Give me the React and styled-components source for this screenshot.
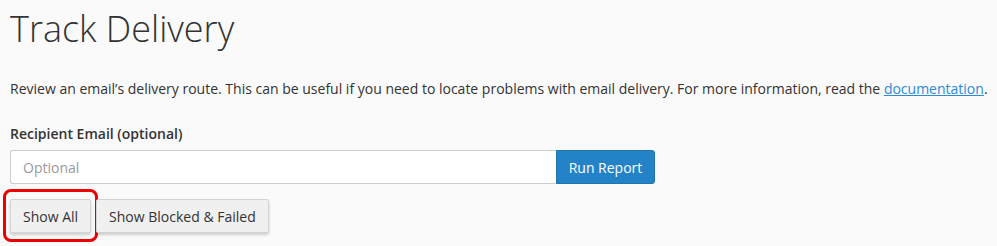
import styled, { createGlobalStyle } from "styled-components";

const GlobalStyle = createGlobalStyle`
  html, body {
    margin: 0;
    padding: 0;
    background: #fafafa;
  }
  body {
    font-family: "Open Sans", "Liberation Sans", sans-serif;
    color: #333;
  }
  * {
    box-sizing: border-box;
  }
`;

const Page = styled.main`
  padding: 0 0 0 10px;
  width: 997px;
  height: 246px;
  overflow: hidden;
`;

const Title = styled.h1`
  font-weight: 300;
  font-size: 36px;
  line-height: 40px;
  color: #333;
  margin: 9px 0 0;
`;

const Intro = styled.p`
  font-size: 14px;
  line-height: 20px;
  margin: 30px 0 0;
  white-space: nowrap;

  a {
    color: #2a8bd6;
    text-decoration: underline;
  }
`;

const Field = styled.div`
  margin-top: 25px;
`;

const Label = styled.label`
  display: block;
  font-size: 14px;
  font-weight: 600;
  line-height: 20px;
  margin-bottom: 6px;
`;

const InputGroup = styled.div`
  display: flex;
  width: 645px;
  height: 34px;
`;

const Input = styled.input`
  flex: 0 0 546px;
  height: 34px;
  padding: 6px 12px;
  font-family: inherit;
  font-size: 14px;
  color: #333;
  background: #fff;
  border: 1px solid #ccc;
  border-right: none;
  border-radius: 3px 0 0 3px;
  outline: none;

  &::placeholder {
    color: #999;
  }
`;

const PrimaryButton = styled.button`
  flex: 0 0 99px;
  height: 34px;
  padding: 0;
  white-space: nowrap;
  font-family: inherit;
  font-size: 14px;
  color: #fff;
  background: #2483c6;
  border: 1px solid #1f74b2;
  border-radius: 0 3px 3px 0;
`;

const Filters = styled.div`
  display: flex;
  gap: 5px;
  margin-top: 15px;
`;

const Highlight = styled.div`
  position: relative;

  ${(p) =>
    p.$active &&
    `
    &::after {
      content: "";
      position: absolute;
      left: -7px;
      top: -10px;
      right: -7px;
      bottom: -9px;
      border: 3px solid #ee0000;
      border-radius: 8px;
      pointer-events: none;
    }
  `}
`;

const FilterButton = styled.button`
  height: 34px;
  padding: 0 12px;
  white-space: nowrap;
  font-family: inherit;
  font-size: 14px;
  color: #333;
  background: #f0f0f0;
  border: 1px solid #d4d4d4;
  border-radius: 2px;
  box-shadow: 0 2px 3px rgba(0, 0, 0, 0.18);
`;

const App = () => (
  <>
    <GlobalStyle />
    <Page>
      <Title>Track Delivery</Title>
      <Intro>
        Review an email’s delivery route. This can be useful if you need to
        locate problems with email delivery. For more information, read the{" "}
        <a href="#docs">documentation</a>.
      </Intro>
      <Field>
        <Label htmlFor="recipient">Recipient Email (optional)</Label>
        <InputGroup>
          <Input id="recipient" type="text" placeholder="Optional" />
          <PrimaryButton>Run Report</PrimaryButton>
        </InputGroup>
      </Field>
      <Filters>
        <Highlight $active>
          <FilterButton>Show All</FilterButton>
        </Highlight>
        <Highlight>
          <FilterButton>Show Blocked &amp; Failed</FilterButton>
        </Highlight>
      </Filters>
    </Page>
  </>
);

export default App;
